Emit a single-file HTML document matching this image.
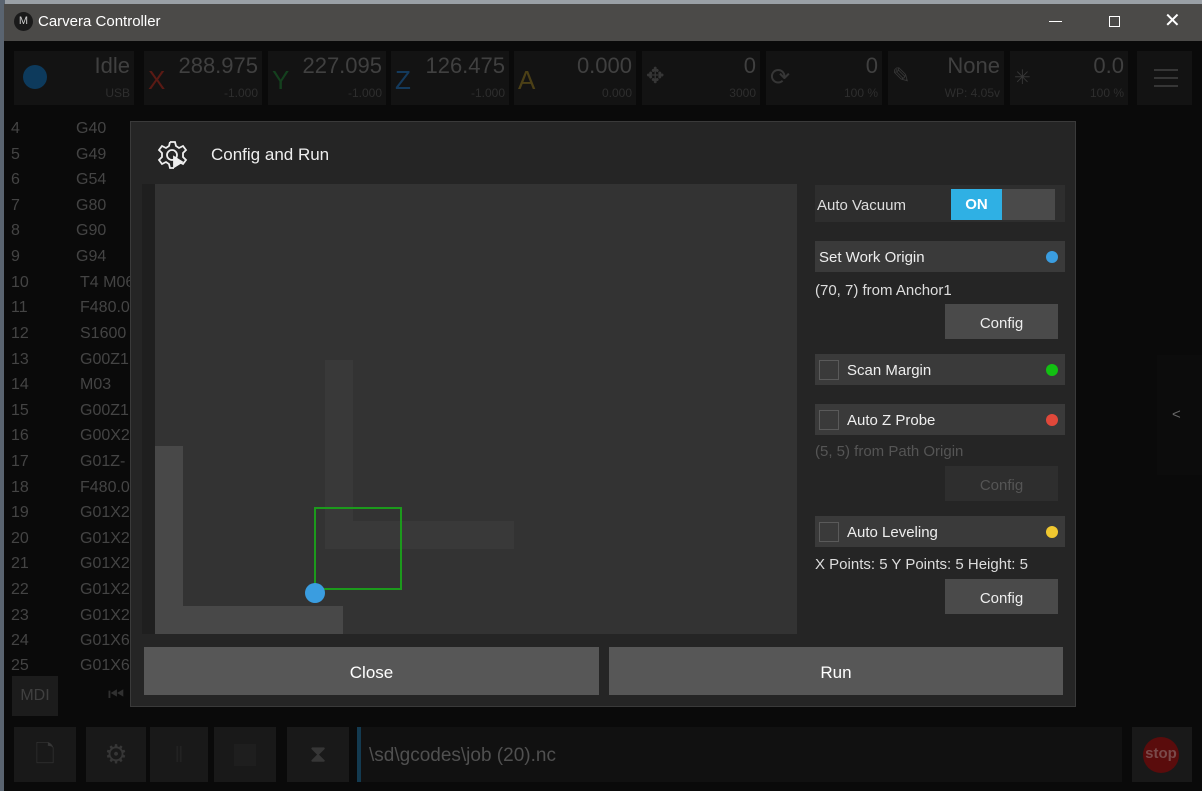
<!DOCTYPE html>
<html><head><meta charset="utf-8"><style>
*{box-sizing:border-box;margin:0;padding:0}
body{width:1202px;height:791px;overflow:hidden;background:#0b0b0b;font-family:"Liberation Sans",sans-serif;position:relative}
.a{position:absolute}
.tile{position:absolute;top:51px;height:54px;background:#131313;color:#363636}
.tile .v{position:absolute;right:4px;top:2px;font-size:22px;color:#404040}
.tile .s{position:absolute;right:4px;top:35px;font-size:12px;color:#2e2e2e}
.tile .l{position:absolute;left:4px;top:14px;font-size:26px}
.row{position:absolute;left:11px;font-size:16px;color:#444;height:25px}
.row b{font-weight:normal;position:absolute;left:65px;white-space:nowrap}
.btm{position:absolute;top:727px;height:55px;background:#191919}
.hdr{position:absolute;left:815px;width:250px;height:31px;background:#3a3a3a;color:#eee;font-size:15px}
.cb{position:absolute;left:4px;top:6px;width:20px;height:20px;border:1px solid #5a5a5a}
.dot{position:absolute;right:7px;top:10px;width:12px;height:12px;border-radius:50%}
.cfg{position:absolute;left:945px;width:113px;height:35px;background:#4a4a4a;color:#eee;font-size:15px;text-align:center;line-height:40px}
.txt{position:absolute;left:815px;font-size:15px;color:#ddd}
</style></head><body>
<div class="a" style="left:0;top:0;width:1202px;height:4px;background:#9aa0a6"></div>
<div class="a" style="left:0;top:0;width:5px;height:791px;background:#5a6470"></div>
<div class="a" style="left:4px;top:4px;width:1198px;height:37px;background:#4b4a48"></div>
<div class="a" style="left:14px;top:12px;width:19px;height:19px;border-radius:50%;background:#1a1a1a;color:#ccc;font-size:11px;text-align:center;line-height:19px">M</div>
<div class="a" style="left:38px;top:13px;font-size:15px;color:#fff">Carvera Controller</div>
<div class="a" style="left:1049px;top:21px;width:13px;height:1px;background:#fff"></div>
<div class="a" style="left:1109px;top:16px;width:11px;height:11px;border:1px solid #fff"></div>
<div class="a" style="left:1164px;top:8px;font-size:20px;color:#fff">✕</div>
<div class="a" style="left:4px;top:41px;width:1198px;height:750px;background:#0a0a0a"></div>

<div class="tile" style="left:14px;width:120px"><div class="a" style="left:9px;top:14px;width:24px;height:24px;border-radius:50%;background:#0d3a5c"></div><div class="v">Idle</div><div class="s">USB</div></div>
<div class="tile" style="left:144px;width:118px"><div class="l" style="color:#5a1a14">X</div><div class="v">288.975</div><div class="s">-1.000</div></div>
<div class="tile" style="left:268px;width:118px"><div class="l" style="color:#14401e">Y</div><div class="v">227.095</div><div class="s">-1.000</div></div>
<div class="tile" style="left:391px;width:118px"><div class="l" style="color:#143a5c">Z</div><div class="v">126.475</div><div class="s">-1.000</div></div>
<div class="tile" style="left:514px;width:122px"><div class="l" style="color:#4c4016">A</div><div class="v">0.000</div><div class="s">0.000</div></div>
<div class="tile" style="left:642px;width:118px"><div class="l" style="font-size:22px;top:12px">✥</div><div class="v">0</div><div class="s">3000</div></div>
<div class="tile" style="left:766px;width:116px"><div class="l" style="font-size:24px;top:12px">⟳</div><div class="v">0</div><div class="s">100 %</div></div>
<div class="tile" style="left:888px;width:116px"><div class="l" style="font-size:22px;top:12px">✎</div><div class="v">None</div><div class="s">WP: 4.05v</div></div>
<div class="tile" style="left:1010px;width:118px"><div class="l" style="font-size:20px;top:14px">✳</div><div class="v">0.0</div><div class="s">100 %</div></div>
<div class="tile" style="left:1137px;width:55px"><div class="a" style="left:17px;top:18px;width:24px;height:2px;background:#363636;box-shadow:0 8px 0 #363636,0 16px 0 #363636"></div></div>

<div class="row" style="top:120px">4<b>G40</b></div>
<div class="row" style="top:146px">5<b>G49</b></div>
<div class="row" style="top:171px">6<b>G54</b></div>
<div class="row" style="top:197px">7<b>G80</b></div>
<div class="row" style="top:222px">8<b>G90</b></div>
<div class="row" style="top:248px">9<b>G94</b></div>
<div class="row" style="top:274px">10<b style="left:69px">T4 M06</b></div>
<div class="row" style="top:299px">11<b style="left:69px">F480.0</b></div>
<div class="row" style="top:325px">12<b style="left:69px">S1600</b></div>
<div class="row" style="top:351px">13<b style="left:69px">G00Z1</b></div>
<div class="row" style="top:376px">14<b style="left:69px">M03</b></div>
<div class="row" style="top:402px">15<b style="left:69px">G00Z1</b></div>
<div class="row" style="top:427px">16<b style="left:69px">G00X2</b></div>
<div class="row" style="top:453px">17<b style="left:69px">G01Z-</b></div>
<div class="row" style="top:479px">18<b style="left:69px">F480.0</b></div>
<div class="row" style="top:504px">19<b style="left:69px">G01X2</b></div>
<div class="row" style="top:530px">20<b style="left:69px">G01X2</b></div>
<div class="row" style="top:555px">21<b style="left:69px">G01X2</b></div>
<div class="row" style="top:581px">22<b style="left:69px">G01X2</b></div>
<div class="row" style="top:607px">23<b style="left:69px">G01X2</b></div>
<div class="row" style="top:632px">24<b style="left:69px">G01X6</b></div>
<div class="row" style="top:657px">25<b style="left:69px">G01X6</b></div>
<div class="a" style="left:12px;top:676px;width:46px;height:40px;background:#1c1c1c;color:#404040;font-size:16px;text-align:center;line-height:40px">MDI</div>
<div class="a" style="left:108px;top:684px;color:#303030;font-size:18px">⏮</div>
<div class="a" style="left:1157px;top:355px;width:45px;height:120px;background:#0c0c0c"></div>
<div class="a" style="left:1172px;top:406px;color:#666;font-size:15px">&lt;</div>

<div class="btm" style="left:14px;width:62px;color:#363636;font-size:24px;text-align:center;line-height:55px">🗋</div>
<div class="btm" style="left:86px;width:60px;color:#363636;font-size:26px;text-align:center;line-height:55px">⚙</div>
<div class="btm" style="left:150px;width:58px;color:#222;font-size:22px;text-align:center;line-height:55px">‖</div>
<div class="btm" style="left:214px;width:62px"><div class="a" style="left:20px;top:17px;width:22px;height:22px;background:#1e1e1e"></div></div>
<div class="btm" style="left:287px;width:62px;color:#363636;font-size:24px;text-align:center;line-height:55px">⧗</div>
<div class="btm" style="left:357px;width:765px;background:#111"><div class="a" style="left:0;top:0;width:4px;height:55px;background:#133a50"></div><div class="a" style="left:12px;top:18px;font-size:19px;color:#505050">\sd\gcodes\job (20).nc</div></div>
<div class="btm" style="left:1132px;width:60px"><div class="a" style="left:11px;top:10px;width:36px;height:36px;border-radius:50%;background:#5a0c0c;color:#7a4a4a;font-size:15px;font-weight:bold;text-align:center;line-height:34px">stop</div></div>

<!-- modal -->
<div class="a" style="left:130px;top:121px;width:946px;height:586px;background:#252525;border:1px solid #3a3a3a"></div>
<svg class="a" style="left:157px;top:139px" width="32" height="32" viewBox="0 0 32 32" fill="none" stroke="#eee" stroke-width="1.8"><path d="M13 3h5l1 4 3 2 4-2 3 4-3 3v4l3 3-3 4-4-2-3 2"/><path d="M13 3l-1 4-3 2-4-2-3 4 3 3v4l-3 3 3 4 4-2 3 2 1 4h4"/><circle cx="15" cy="16" r="5"/><path d="M17 18v10l8-5z" fill="#eee"/></svg>
<div class="a" style="left:211px;top:145px;font-size:17px;color:#eee">Config and Run</div>

<div class="a" style="left:142px;top:184px;width:655px;height:450px;background:#1f1f1f"></div>
<div class="a" style="left:155px;top:184px;width:642px;height:450px;background:#333"></div>
<div class="a" style="left:325px;top:360px;width:28px;height:189px;background:#393939"></div>
<div class="a" style="left:325px;top:521px;width:189px;height:28px;background:#393939"></div>
<div class="a" style="left:155px;top:446px;width:28px;height:188px;background:#484848"></div>
<div class="a" style="left:155px;top:606px;width:188px;height:28px;background:#484848"></div>
<div class="a" style="left:314px;top:507px;width:88px;height:83px;border:2px solid #1c9a1c"></div>
<div class="a" style="left:305px;top:583px;width:20px;height:20px;border-radius:50%;background:#3a9de0"></div>

<div class="a" style="left:815px;top:185px;width:250px;height:37px;background:#2e2e2e"></div>
<div class="txt" style="left:817px;top:197px">Auto Vacuum</div>
<div class="a" style="left:951px;top:189px;width:104px;height:31px;background:#4a4a4a"></div>
<div class="a" style="left:951px;top:189px;width:51px;height:31px;background:#2fb0e4;color:#fff;font-weight:bold;font-size:15px;text-align:center;line-height:31px">ON</div>

<div class="hdr" style="top:241px"><span class="a" style="left:4px;top:8px">Set Work Origin</span><div class="dot" style="background:#3a9de0"></div></div>
<div class="txt" style="top:282px">(70, 7) from Anchor1</div>
<div class="cfg" style="top:304px">Config</div>
<div class="hdr" style="top:354px"><div class="cb"></div><span class="a" style="left:32px;top:8px">Scan Margin</span><div class="dot" style="background:#12c012"></div></div>
<div class="hdr" style="top:404px"><div class="cb"></div><span class="a" style="left:32px;top:8px">Auto Z Probe</span><div class="dot" style="background:#e0483a"></div></div>
<div class="txt" style="top:443px;color:#555">(5, 5) from Path Origin</div>
<div class="cfg" style="top:466px;background:#2e2e2e;color:#555">Config</div>
<div class="hdr" style="top:516px"><div class="cb"></div><span class="a" style="left:32px;top:8px">Auto Leveling</span><div class="dot" style="background:#f0c830"></div></div>
<div class="txt" style="top:556px">X Points: 5 Y Points: 5 Height: 5</div>
<div class="cfg" style="top:579px">Config</div>

<div class="a" style="left:144px;top:647px;width:455px;height:48px;background:#575757;color:#fff;font-size:17px;text-align:center;line-height:52px">Close</div>
<div class="a" style="left:609px;top:647px;width:454px;height:48px;background:#575757;color:#fff;font-size:17px;text-align:center;line-height:52px">Run</div>
</body></html>
